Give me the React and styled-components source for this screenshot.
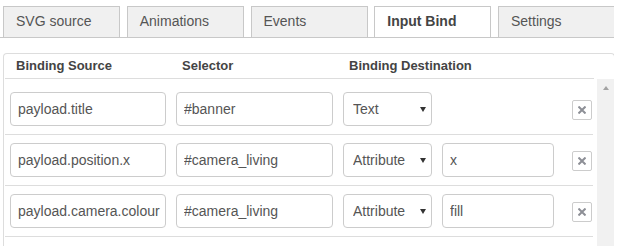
import styled, { createGlobalStyle } from 'styled-components';

const GlobalStyle = createGlobalStyle`
  html, body {
    margin: 0;
    padding: 0;
    background: #fff;
    overflow: hidden;
  }

  body {
    font-family: "Liberation Sans", Arial, sans-serif;
    font-size: 14px;
    color: #555;
  }
`;

const Page = styled.div`
  width: 614px;
  height: 246px;
  overflow: hidden;
`;

const TabBar = styled.div`
  display: flex;
  align-items: flex-start;
  gap: 6.75px;
  padding: 6px 0 0 3px;
  border-bottom: 1px solid #c8c8c8;
  overflow: hidden;
`;

const Tab = styled.div`
  flex: 0 0 117px;
  box-sizing: border-box;
  height: ${(p) => (p.$active ? '32px' : '31px')};
  margin-bottom: ${(p) => (p.$active ? '-1px' : '0')};
  padding: 0 13px 0 12px;
  border: 1px solid #c8c8c8;
  border-bottom: none;
  background: ${(p) => (p.$active ? '#fff' : '#f0f0f0')};
  color: ${(p) => (p.$active ? '#444' : '#555')};
  font-weight: ${(p) => (p.$active ? 700 : 400)};
  line-height: 29px;
  white-space: nowrap;
`;

const Panel = styled.div`
  box-sizing: border-box;
  width: 612px;
  height: 200px;
  margin: 15px 0 0 3px;
  border: 1px solid #ddd;
  border-bottom: none;
  border-radius: 4px 4px 0 0;
`;

const Grid = styled.div`
  display: grid;
  grid-template-columns: 156px 157px 89px 112px 1fr;
  column-gap: 10px;
  align-items: center;
`;

const Header = styled(Grid)`
  height: 24px;
  margin: 0 20px 0 1px;
  padding: 0 1px 0 5px;
  border-bottom: 1px solid #ddd;
`;

const HeadCell = styled.div`
  padding-left: 6px;
  font-size: 13px;
  font-weight: 700;
  color: #444;
  line-height: 24px;
  white-space: nowrap;
`;

const Body = styled.div`
  display: flex;
  height: 170px;
`;

const List = styled.div`
  flex: 1;
  margin: 0 4px 0 1px;
  padding-top: 5px;
`;

const Row = styled(Grid)`
  padding: 8px 1px 8px 5px;
  border-bottom: 1px solid #ddd;
`;

const Field = styled.input`
  box-sizing: border-box;
  width: 100%;
  height: 34px;
  padding: 0 3px 0 7px;
  border: 1px solid #ccc;
  border-radius: 4px;
  font-family: inherit;
  font-size: 14px;
  color: #555;
  background: #fff;
  outline: none;
`;

const SelectWrap = styled.div`
  position: relative;
  width: 89px;
  height: 34px;
`;

const Select = styled.select`
  appearance: none;
  box-sizing: border-box;
  width: 100%;
  height: 34px;
  padding: 0 0 0 9px;
  border: 1px solid #ccc;
  border-radius: 4px;
  font-family: inherit;
  font-size: 14px;
  color: #555;
  background: #fff;
  outline: none;
`;

const Caret = styled.span`
  position: absolute;
  right: 6px;
  top: 15px;
  width: 0;
  height: 0;
  border-left: 3px solid transparent;
  border-right: 3px solid transparent;
  border-top: 5px solid #333;
  pointer-events: none;
`;

const RemoveButton = styled.button`
  justify-self: end;
  box-sizing: border-box;
  width: 20px;
  height: 20px;
  margin-top: 2px;
  padding: 0;
  border: 1px solid #ccc;
  border-radius: 2px;
  background: #fff;
  display: flex;
  align-items: center;
  justify-content: center;
`;

const Scrollbar = styled.div`
  flex: 0 0 17px;
  background: #f1f1f1;
  display: flex;
  justify-content: center;
  padding-top: 7px;
  box-sizing: border-box;
`;

const UpArrow = styled.span`
  width: 0;
  height: 0;
  border-left: 3px solid transparent;
  border-right: 3px solid transparent;
  border-bottom: 4px solid #a3a3a3;
`;

const tabs = ['SVG source', 'Animations', 'Events', 'Input Bind', 'Settings'];

const bindings = [
  { source: 'payload.title', selector: '#banner', type: 'Text', attr: null },
  { source: 'payload.position.x', selector: '#camera_living', type: 'Attribute', attr: 'x' },
  { source: 'payload.camera.colour', selector: '#camera_living', type: 'Attribute', attr: 'fill' },
];

function CrossIcon() {
  return (
    <svg width="8" height="8" viewBox="0 0 8 8">
      <path d="M1.2 1.2 L6.8 6.8 M6.8 1.2 L1.2 6.8" stroke="#8d8f96" strokeWidth="2" strokeLinecap="square" />
    </svg>
  );
}

export default function App() {
  return (
    <Page>
      <GlobalStyle />

      <TabBar>
        {tabs.map((t) => (
          <Tab key={t} $active={t === 'Input Bind'}>{t}</Tab>
        ))}
      </TabBar>

      <Panel>
        <Header>
          <HeadCell>Binding Source</HeadCell>
          <HeadCell>Selector</HeadCell>
          <HeadCell>Binding Destination</HeadCell>
        </Header>

        <Body>
          <List>
            {bindings.map((b, i) => (
              <Row key={i}>
                <Field defaultValue={b.source} />
                <Field defaultValue={b.selector} />
                <SelectWrap>
                  <Select defaultValue={b.type}>
                    <option>Text</option>
                    <option>Attribute</option>
                  </Select>
                  <Caret />
                </SelectWrap>
                {b.attr !== null ? <Field defaultValue={b.attr} /> : <div />}
                <RemoveButton>
                  <CrossIcon />
                </RemoveButton>
              </Row>
            ))}
          </List>

          <Scrollbar>
            <UpArrow />
          </Scrollbar>
        </Body>
      </Panel>
    </Page>
  );
}
